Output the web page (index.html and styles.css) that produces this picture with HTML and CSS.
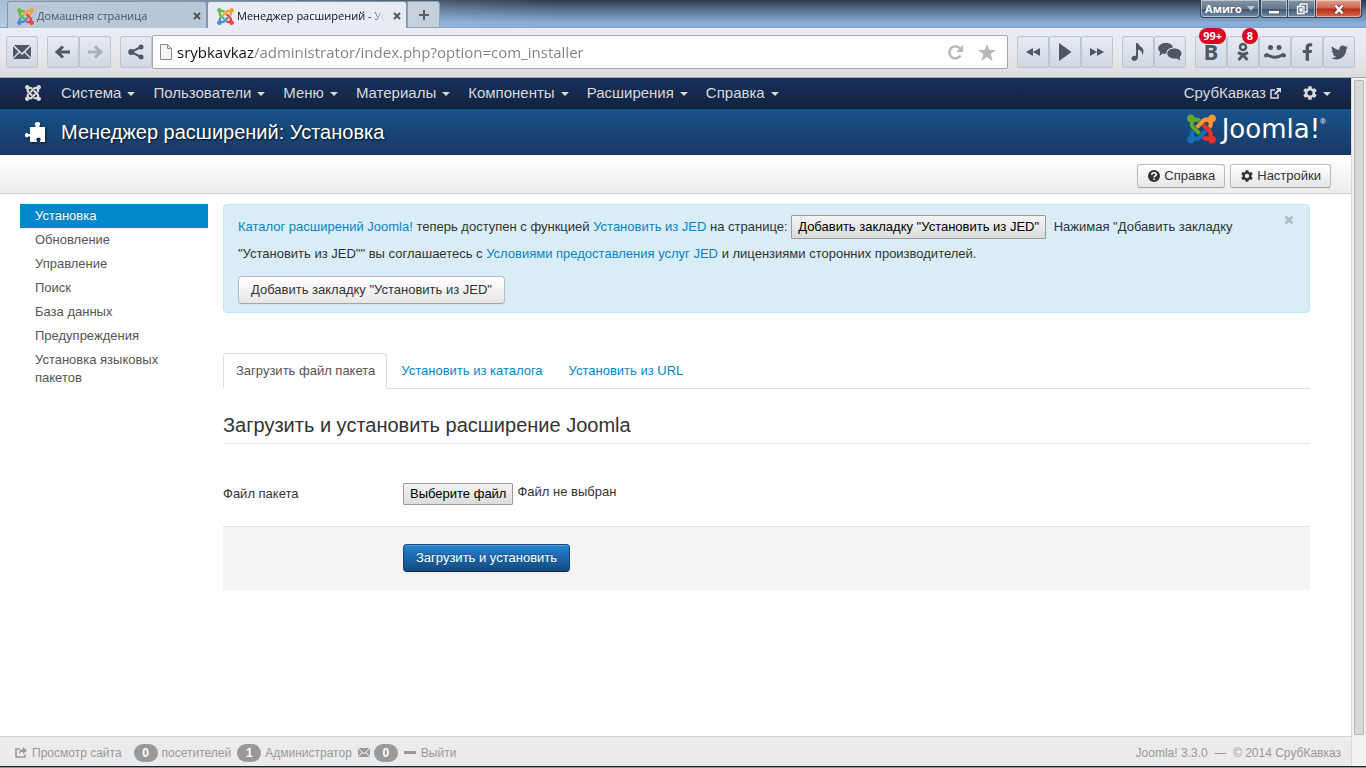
FILE: index.html
```html
<!DOCTYPE html>
<html lang="ru">
<head>
<meta charset="utf-8">
<title>Менеджер расширений - Установка</title>
<link rel="stylesheet" href="styles.css">
</head>
<body>
<svg class="defs" aria-hidden="true">
  <symbol id="j-a" viewBox="0 0 448 512"><path d="M.6 92.1C.6 58.8 27.4 32 60.4 32c30 0 54.5 21.9 59.2 50.2 32.6-7.6 67.1.6 96.5 30l-44.3 44.3c-20.5-20.5-42.6-16.3-55.4-3.5-14.3 14.3-14.3 37.9 0 52.2l99.5 99.5-44 44.3c-87.7-87.2-49.7-49.7-99.8-99.7-26.8-26.5-35-64.8-24.8-98.9C20.4 144.6.6 120.7.6 92.1z"/></symbol>
  <symbol id="j-b" viewBox="0 0 448 512"><path d="M130.1 208.5l44.3 44.3c10-10 89.7-89.7 99.7-99.8 14.3-14.3 37.6-14.3 51.9 0 12.8 12.8 17 35-3.5 55.4l44 44.3c31.2-31.2 38.5-67.6 28.9-101.2 29.2-4.1 51.9-29.2 51.9-59.5 0-33.2-26.8-60.1-59.8-60.1-30.3 0-55.4 22.5-59.5 51.6-33.8-9.9-71.7-1.5-98.3 25.1-18.3 19.1-71.1 71.5-99.6 99.9z"/></symbol>
  <symbol id="j-c" viewBox="0 0 448 512"><path d="M396.4 360.7c8.2-32.7-.9-68.5-26.3-93.9-11.8-12.2 5 4.7-99.5-99.7l-44.3 44.3 99.7 99.7c14.3 14.3 14.3 37.6 0 51.9-12.8 12.8-35 17-55.4-3.5l-44 44.3c27.6 30.2 68 38.8 102.7 28 5.5 27.4 29.7 48.1 58.9 48.1 33 0 59.8-26.8 59.8-60.1 0-30.2-22.5-55-51.6-59.1z"/></symbol>
  <symbol id="j-d" viewBox="0 0 448 512"><path d="M312.1 307.6l-44-44.3c-87 86.4-50.4 50.4-99.7 99.8-14.3 14.3-37.6 14.3-51.9 0-13.1-13.4-16.9-35.3 3.2-55.4l-44-44.3c-30.2 30.2-38 65.2-29.5 98.3-26.7 6-46.2 29.9-46.2 58.2C0 453.2 26.8 480 59.8 480c28.6 0 52.5-19.8 58.6-46.7 32.7 8.2 68.5-.6 94.2-26 32.1-32 12.2-12.4 99.5-99.7z"/></symbol>
  <symbol id="joomla" viewBox="0 32 448 448"><use href="#j-a" width="448" height="512"/><use href="#j-b" width="448" height="512"/><use href="#j-c" width="448" height="512"/><use href="#j-d" width="448" height="512"/></symbol>
  <symbol id="joomla-color" viewBox="0 32 448 448"><use href="#j-a" width="448" height="512" fill="#5fa829"/><use href="#j-b" width="448" height="512" fill="#ff982e"/><use href="#j-c" width="448" height="512" fill="#e8322b"/><use href="#j-d" width="448" height="512" fill="#1671b5"/></symbol>
  <symbol id="joomla-tab" viewBox="0 32 448 448"><use href="#j-a" width="448" height="512" fill="#6cbb45"/><use href="#j-b" width="448" height="512" fill="#f9a032"/><use href="#j-c" width="448" height="512" fill="#f04438"/><use href="#j-d" width="448" height="512" fill="#4a8fd0"/></symbol>
  <symbol id="gear" viewBox="2 2 20 20"><path d="M19.14 12.94c.04-.3.06-.61.06-.94 0-.32-.02-.64-.07-.94l2.03-1.58c.18-.14.23-.41.12-.61l-1.92-3.32c-.12-.22-.37-.29-.59-.22l-2.39.96c-.5-.38-1.03-.7-1.62-.94L14.4 2.81c-.04-.24-.24-.41-.48-.41h-3.84c-.24 0-.43.17-.47.41L9.25 5.35C8.66 5.59 8.12 5.92 7.63 6.29L5.24 5.33c-.22-.08-.47 0-.59.22L2.74 8.87c-.12.21-.08.47.12.61l2.03 1.58C4.84 11.36 4.8 11.69 4.8 12s.02.64.07.94l-2.03 1.58c-.18.14-.23.41-.12.61l1.92 3.32c.12.22.37.29.59.22l2.39-.96c.5.38 1.03.7 1.62.94l.36 2.54c.05.24.24.41.48.41h3.84c.24 0 .44-.17.47-.41l.36-2.54c.59-.24 1.13-.56 1.62-.94l2.39.96c.22.08.47 0 .59-.22l1.92-3.32c.12-.22.07-.47-.12-.61zM12 15.6a3.6 3.6 0 1 1 0-7.2 3.6 3.6 0 0 1 0 7.2z"/></symbol>
  <symbol id="envelope" viewBox="0 0 18 14"><path d="M1 0h16L9 8zM0 1.200l5.600 5.500L0 12.400zM18 1.200v11.200l-5.600-5.700zM6.600 7.700L9 10l2.400-2.300L17.600 14H.4z"/></symbol>
</svg>

<header class="browser">
  <div class="titlebar">
    <nav class="tabs-strip" aria-label="Вкладки браузера">
      <div class="btab">
        <svg class="favicon"><use href="#joomla-tab"/></svg>
        <span class="btab-title">Домашняя страница</span>
        <button class="btab-close" aria-label="Закрыть вкладку"><svg viewBox="0 0 8 8"><path d="M1 1l6 6M7 1L1 7"/></svg></button>
      </div>
      <div class="btab btab-active">
        <svg class="favicon"><use href="#joomla-tab"/></svg>
        <span class="btab-title">Менеджер расширений - Установка</span>
        <button class="btab-close" aria-label="Закрыть вкладку"><svg viewBox="0 0 8 8"><path d="M1 1l6 6M7 1L1 7"/></svg></button>
      </div>
      <button class="new-tab" aria-label="Новая вкладка"><svg viewBox="0 0 12 12"><path d="M6 1v10M1 6h10"/></svg></button>
    </nav>
    <div class="window-controls">
      <button class="wc wc-name">Амиго <span class="wc-arrow"></span></button>
      <div class="wc-group">
        <button class="wc wc-min" aria-label="Свернуть"><svg width="12" height="14" viewBox="0 0 12 14"><rect x=".5" y="8.500" width="11" height="3.500" fill="#fff" stroke="#566070"/></svg></button>
        <button class="wc wc-max" aria-label="Развернуть"><svg width="12" height="14" viewBox="0 0 12 14" fill="none"><path d="M4 4V2h7v8H9" stroke="#566070" stroke-width="3"/><path d="M4 4V2h7v8H9M1.500 4.500h6.500v7H1.500zM4 7h2v2H4z" stroke="#fff" stroke-width="1.300"/></svg></button>
        <button class="wc wc-close" aria-label="Закрыть"><svg width="12" height="14" viewBox="0 0 12 14" fill="none"><path d="M2.500 3.500l7 8M9.500 3.500l-7 8" stroke="#5c3434" stroke-width="4"/><path d="M2.500 3.500l7 8M9.500 3.500l-7 8" stroke="#fff" stroke-width="2.600"/></svg></button>
      </div>
    </div>
  </div>

  <div class="toolbar">
    <div class="tool-group">
      <button class="tool" aria-label="Почта"><svg width="18" height="14"><use href="#envelope"/></svg></button>
    </div>
    <div class="tool-group">
      <button class="tool" aria-label="Назад"><svg width="16" height="14" viewBox="0 0 16 14" class="stroke"><path d="M15 7H2M8 1.500L2 7l6 5.500"/></svg></button>
      <button class="tool tool-off" aria-label="Вперёд"><svg width="16" height="14" viewBox="0 0 16 14" class="stroke"><path d="M1 7h13M8 1.500L14 7l-6 5.500"/></svg></button>
    </div>
    <div class="tool-address">
      <button class="tool" aria-label="Поделиться"><svg width="16" height="16" viewBox="0 0 16 16"><path d="M13 3L3 8l10 5" fill="none" stroke="currentColor" stroke-width="2"/><circle cx="13" cy="3" r="2.500"/><circle cx="3.200" cy="8" r="3"/><circle cx="13" cy="13" r="2.500"/></svg></button>
      <div class="address">
        <svg width="12" height="16" viewBox="0 0 12 16" fill="#f4f4f4" stroke="#8c8c8c"><path d="M.5.500h7l4 4v11H.500zM7.500.500v4h4"/></svg>
        <input class="url" type="text" aria-label="Адрес" value="srybkavkaz/administrator/index.php?option=com_installer">
        <button class="addr-btn" aria-label="Обновить"><svg width="17" height="17" viewBox="0 0 17 17"><path d="M13.500 11.500a6 6 0 1 1-.5-7" fill="none" stroke="currentColor" stroke-width="2.400"/><path d="M16 1v7H9z"/></svg></button>
        <button class="addr-btn" aria-label="В закладки"><svg width="18" height="17" viewBox="0 0 18 17"><path d="M9 0l2.300 6H18l-5.300 4.100L14.600 17 9 12.900 3.400 17l1.900-6.900L0 6h6.700z"/></svg></button>
      </div>
    </div>
    <div class="tool-group">
      <button class="tool" aria-label="Предыдущий трек"><svg width="14" height="8" viewBox="0 0 14 8"><path d="M7 0v8L0 4zM14 0v8L7 4z"/></svg></button>
      <button class="tool" aria-label="Играть"><svg width="14" height="18" viewBox="0 0 14 18"><path d="M1 0l12.500 9L1 18z"/></svg></button>
      <button class="tool" aria-label="Следующий трек"><svg width="14" height="8" viewBox="0 0 14 8"><path d="M0 0v8l7-4zM7 0v8l7-4z"/></svg></button>
    </div>
    <div class="tool-group">
      <button class="tool" aria-label="Музыка"><svg width="14" height="18" viewBox="0 0 14 18"><path d="M5 0h2c.4 3 5.500 4 5.500 8 0 1.500-.5 3-1.300 4 .2-3-1.200-4.700-4.200-5.500V14c0 2.200-1.500 3.800-3.800 3.800C1.500 17.800.5 17 .500 15.500c0-2 2.200-3.300 4.500-2.700z"/></svg></button>
      <button class="tool" aria-label="Сообщения"><svg width="24" height="18" viewBox="0 0 24 18"><path d="M7.500 0C12 0 14.700 2 15 4.600 11 5 8.300 7 8.300 10.700 7 11 5.500 10.800 4.700 10.500L1.500 13l.6-4C-2 5.500 1 0 7.500 0z"/><path d="M16 5.500c4.500 0 7.500 2.200 7.500 5 0 1.500-.7 2.700-1.800 3.600l.5 3.200-3.300-1.900c-5 .9-9.600-1.400-9.600-4.900 0-2.800 2.700-5 6.700-5z"/></svg></button>
    </div>
    <div class="tool-group">
      <button class="tool tool-vk" aria-label="ВКонтакте, больше 99">B<span class="badge">99+</span></button>
      <button class="tool" aria-label="Одноклассники, 8"><svg width="12" height="18" viewBox="0 0 12 18" fill="none" stroke="currentColor" stroke-width="2.500"><circle cx="6" cy="4" r="3"/><path d="M1 9.500q5 3.500 10 0M6 12l-4.500 5M6 12l4.500 5" stroke-width="2.800"/></svg><span class="badge">8</span></button>
      <button class="tool" aria-label="Мой Мир"><svg width="22" height="14" viewBox="0 0 22 14"><circle cx="6.500" cy="2.500" r="2.500"/><circle cx="15" cy="2.500" r="2.500"/><path d="M2 9q9 6.500 18 0" fill="none" stroke="currentColor" stroke-width="2.800"/><circle cx="2" cy="10.500" r="2"/><circle cx="20" cy="10.500" r="2"/></svg></button>
      <button class="tool" aria-label="Facebook"><svg width="11" height="18" viewBox="0 0 320 512"><path d="M279.140 288l14.220-92.660h-88.910v-60.130c0-25.350 12.420-50.060 52.240-50.060h40.420V6.260S260.430 0 225.360 0c-73.220 0-121.080 44.380-121.080 124.720v70.620H22.890V288h81.390v224h100.170V288z"/></svg></button>
      <button class="tool" aria-label="Twitter"><svg width="17" height="17" viewBox="0 0 512 512"><path d="M459.370 151.716c.325 4.548.325 9.097.325 13.645 0 138.720-105.583 298.558-298.558 298.558-59.452 0-114.680-17.219-161.137-47.106 8.447.974 16.568 1.299 25.340 1.299 49.055 0 94.213-16.568 130.274-44.832-46.132-.975-84.792-31.188-98.112-72.772 6.498.974 12.995 1.624 19.818 1.624 9.421 0 18.843-1.300 27.614-3.573-48.081-9.747-84.143-51.980-84.143-102.985v-1.299c13.969 7.797 30.214 12.670 47.431 13.319-28.264-18.843-46.781-51.005-46.781-87.391 0-19.492 5.197-37.360 14.294-52.954 51.655 63.675 129.300 105.258 216.365 109.807-1.624-7.797-2.599-15.918-2.599-24.040 0-57.828 46.782-104.934 104.934-104.934 30.213 0 57.502 12.670 76.670 33.137 23.715-4.548 46.456-13.320 66.599-25.340-7.798 24.366-24.366 44.833-46.132 57.827 21.117-2.273 41.584-8.122 60.426-16.243-14.292 20.791-32.161 39.308-52.628 54.253z"/></svg></button>
    </div>
  </div>
</header>

<div class="viewport">
  <div class="page">
    <nav class="navbar">
      <a class="nav-home" href="#" aria-label="Joomla!"><svg width="16" height="16"><use href="#joomla"/></svg></a>
      <a class="nav-link" href="#">Система<span class="caret"></span></a>
      <a class="nav-link" href="#">Пользователи<span class="caret"></span></a>
      <a class="nav-link" href="#">Меню<span class="caret"></span></a>
      <a class="nav-link" href="#">Материалы<span class="caret"></span></a>
      <a class="nav-link" href="#">Компоненты<span class="caret"></span></a>
      <a class="nav-link" href="#">Расширения<span class="caret"></span></a>
      <a class="nav-link" href="#">Справка<span class="caret"></span></a>
      <span class="spacer"></span>
      <a class="nav-link nav-site" href="#">СрубКавказ<svg width="11" height="11" viewBox="0 0 11 11"><path d="M5 2H1v8h7V6" fill="none" stroke="currentColor" stroke-width="1.500"/><path d="M6 0h5v5L9.300 3.300 5.500 7 4 5.500l3.700-3.800z"/></svg></a>
      <a class="nav-link" href="#" aria-label="Профиль"><svg width="14" height="14"><use href="#gear"/></svg><span class="caret"></span></a>
    </nav>

    <div class="header">
      <svg class="puzzle" width="21" height="21" viewBox="0 0 21 21"><path d="M5 5h5.500V3.500C9 2 10 0 12.500 0S16 2 14.500 3.500V5H20v15h-5c-.6-1 1-1.600.7-3.200-.3-1.500-4-1.500-4.300 0C11 18.400 12.600 19 12 20H5v-5.500H3.500C2.500 16 0 15.700 0 13.300S2.500 10.500 3.500 12H5z"/></svg>
      <h1 class="page-title">Менеджер расширений: Установка</h1>
      <a class="brand" href="#"><svg width="29" height="30"><use href="#joomla-color"/></svg><span class="brand-name">Joomla!</span><span class="brand-mark">®</span></a>
    </div>

    <div class="subhead">
      <button class="btn btn-small"><svg width="12" height="12" viewBox="0 0 12 12"><circle cx="6" cy="6" r="6"/><path d="M3.800 4.800C3.800 2 8.300 2.200 8.200 4.600 8.100 6 6.100 5.900 6.100 7.500M6.100 8.500V10" fill="none" stroke="#fff" stroke-width="1.600"/></svg>Справка</button>
      <button class="btn btn-small"><svg width="12" height="12"><use href="#gear"/></svg>Настройки</button>
    </div>

    <div class="columns">
      <nav class="sidebar">
        <a class="side-link side-active" href="#">Установка</a>
        <a class="side-link" href="#">Обновление</a>
        <a class="side-link" href="#">Управление</a>
        <a class="side-link" href="#">Поиск</a>
        <a class="side-link" href="#">База данных</a>
        <a class="side-link" href="#">Предупреждения</a>
        <a class="side-link" href="#">Установка языковых пакетов</a>
      </nav>

      <main class="main">
        <div class="alert">
          <button class="alert-close" aria-label="Закрыть"><svg width="10" height="10" viewBox="0 0 10 10"><path d="M1.500 1.500l7 7M8.500 1.500l-7 7" stroke="currentColor" stroke-width="2.600"/></svg></button>
          <p class="alert-text"><a href="#">Каталог расширений Joomla!</a> теперь доступен с функцией <a href="#">Установить из JED</a> на странице: <button class="native-btn jed-btn">Добавить закладку "Установить из JED"</button> Нажимая "Добавить закладку "Установить из JED"" вы соглашаетесь с <a href="#">Условиями предоставления услуг JED</a> и лицензиями сторонних производителей.</p>
          <button class="btn">Добавить закладку "Установить из JED"</button>
        </div>

        <nav class="tabs">
          <a class="tab tab-active" href="#">Загрузить файл пакета</a>
          <a class="tab" href="#">Установить из каталога</a>
          <a class="tab" href="#">Установить из URL</a>
        </nav>

        <form class="form">
          <h2 class="legend">Загрузить и установить расширение Joomla</h2>
          <div class="control-row">
            <label class="control-label" for="package">Файл пакета</label>
            <div class="file">
              <label class="native-btn" for="package">Выберите файл</label>
              <input class="file-input" id="package" type="file">
              <span class="file-name">Файл не выбран</span>
            </div>
          </div>
          <div class="form-actions">
            <button class="btn btn-primary" type="button">Загрузить и установить</button>
          </div>
        </form>
      </main>
    </div>

    <footer class="status">
      <a class="status-link" href="#"><svg width="12" height="11" viewBox="0 0 12 11"><path d="M5 2H1v8h9V7.500" fill="none" stroke="currentColor" stroke-width="1.600"/><path d="M8 0l4 3.500L8 7V5C6 5 4.700 5.500 3.500 7.500 3.700 4 5.500 2.200 8 2z"/></svg>Просмотр сайта</a>
      <span class="status-item"><span class="count">0</span>посетителей</span>
      <span class="status-item"><span class="count">1</span>Администратор</span>
      <a class="status-item" href="#" aria-label="Сообщения"><svg width="12" height="9" viewBox="0 0 18 14" preserveAspectRatio="none"><use href="#envelope" width="18" height="14"/></svg><span class="count">0</span></a>
      <a class="status-link" href="#"><span class="dash"></span>Выйти</a>
      <span class="spacer"></span>
      <span>Joomla! 3.3.0 &nbsp;—&nbsp; © 2014 СрубКавказ</span>
    </footer>
  </div>
  <div class="scrollbar"><div class="thumb"></div></div>
</div>
<div class="taskbar-edge"></div>
</body>
</html>
```
FILE: styles.css
```css
* { box-sizing: border-box; }
body {
  margin: 0;
  min-height: 100vh;
  display: flex;
  flex-direction: column;
  background: #fff;
  color: #333;
  font: 13px/18px "Liberation Sans", Arial, sans-serif;
}
button { font: inherit; color: inherit; margin: 0; padding: 0; border: 0; background: none; cursor: pointer; }
a { color: #0088cc; text-decoration: none; }
svg { flex: none; }
svg:not([fill]) { fill: currentColor; }
.defs { position: absolute; width: 0; height: 0; }
.spacer { flex: 1; }

/* Browser window */
.titlebar {
  height: 28px;
  display: flex;
  justify-content: space-between;
  align-items: flex-start;
  padding: 0 4px 0 7px;
  border-bottom: 1px solid #7fa3cc;
  background:
    linear-gradient(90deg, rgba(182, 204, 228, .9) 0, rgba(150, 180, 212, 0) 560px),
    linear-gradient(#2a3a4b, #5f7c9c 45%, #89aeda 85%, #86abd9);
}
.tabs-strip { display: flex; padding-top: 1px; }
.btab {
  width: 200px;
  height: 27px;
  display: flex;
  align-items: center;
  padding: 2px 5px 0 9px;
  border: 1px solid #8195ab;
  border-bottom: 0;
  border-radius: 3px 3px 0 0;
  background: #b9c8d9;
  color: #4c545e;
  font: 11px/16px "Open Sans", "Noto Sans", sans-serif;
}
.btab-active { background: #e9ecf4; color: #111; }
.favicon { width: 17px; height: 17px; margin-right: 3px; }
.btab-title {
  flex: 1;
  min-width: 0;
  overflow: hidden;
  white-space: nowrap;
  -webkit-mask-image: linear-gradient(90deg, #000 88%, transparent);
  mask-image: linear-gradient(90deg, #000 88%, transparent);
}
.btab-close { display: flex; margin-left: 8px; color: #555; }
.btab-close svg { width: 8px; height: 8px; stroke: currentColor; stroke-width: 2; }
.new-tab {
  width: 33px;
  height: 27px;
  display: grid;
  place-items: center;
  border: 1px solid #8ea2b9;
  border-radius: 0 3px 0 0;
  background: #c6d0dc;
  color: #555c66;
}
.new-tab svg { width: 12px; height: 12px; stroke: currentColor; stroke-width: 2; }
.window-controls { display: flex; }
.wc {
  height: 18px;
  display: flex;
  align-items: center;
  justify-content: center;
  border: 1px solid #37475a;
  border-top: 0;
  box-shadow: inset 0 0 0 1px rgba(255, 255, 255, .45);
  background: linear-gradient(#8595a7, #66788d 50%, #3f5166 52%, #7390ad);
}
.wc-name { width: 60px; gap: 5px; border-radius: 0 0 4px 4px; color: #fff; font: bold 11px/16px "Open Sans", "Noto Sans", sans-serif; }
.wc-arrow { border: 4px solid transparent; border-top: 5px solid #b8c5d3; border-bottom: 0; }
.wc-group { display: flex; }
.wc-min { width: 28px; border-radius: 0 0 0 4px; }
.wc-max { width: 28px; border-left: 0; }
.wc-close { width: 46px; border-left: 0; border-radius: 0 0 4px 0; background: linear-gradient(#e0a092, #cd6350 48%, #b52d17 52%, #d66b4c); }

.toolbar {
  height: 50px;
  display: flex;
  align-items: flex-start;
  gap: 9px;
  padding: 7px 11px 0 6px;
  border-bottom: 1px solid #a9a9a9;
  background: linear-gradient(#e9ecf4, #e8e9ed 50%, #dcdcdc);
}
.tool-group { display: flex; padding-top: 1px; }
.tool {
  position: relative;
  width: 32px;
  height: 32px;
  display: grid;
  place-items: center;
  border: 1px solid #b9c6d3;
  border-radius: 2px;
  background: linear-gradient(#e6eaf0, #cfd8e2);
  color: #4f5762;
}
.tool-off { color: #a9b0b8; }
.tool-vk { font: bold 22px/28px "Open Sans", "Noto Sans", sans-serif; align-items: start; }
svg.stroke { fill: none; stroke: currentColor; stroke-width: 3; }
.badge {
  position: absolute;
  top: -9px;
  right: 0;
  min-width: 16px;
  padding: 0 4px;
  border-radius: 8px;
  background: #dd0523;
  color: #fff;
  font: bold 11px/16px "Open Sans", "Noto Sans", sans-serif;
}
.tool-address { flex: 1; display: flex; align-items: center; }
.address {
  flex: 1;
  height: 34px;
  display: flex;
  align-items: center;
  padding: 0 11px 0 7px;
  border: 1px solid #a3a6ab;
  border-radius: 2px;
  background: #fff;
}
.url {
  flex: 1;
  min-width: 0;
  padding: 0;
  margin-left: 5px;
  border: 0;
  outline: 0;
  font: 15px/24px "Open Sans", "Noto Sans", sans-serif;
  background: linear-gradient(90deg, #111 76px, #808080 76px);
  -webkit-background-clip: text;
  background-clip: text;
  -webkit-text-fill-color: transparent;
}
.addr-btn { display: flex; margin-left: 14px; color: #b4b7bb; }

/* Page viewport */
.viewport { flex: 1; display: flex; }
.page { flex: 1; min-width: 0; display: flex; flex-direction: column; }
.scrollbar { width: 15px; padding: 2px 2px 31px; border-left: 1px solid #d9d9d9; background: #f1f1f1; }
.thumb { height: 100%; border: 1px solid #b5b5b5; border-radius: 1px; background: #d8d8d8; }
.taskbar-edge { height: 2px; border-top: 1px solid #1d2635; background: #8793a5; }

.navbar {
  height: 31px;
  display: flex;
  align-items: center;
  padding: 0 11px 0 16px;
  border-bottom: 1px solid #0d1f3a;
  background: linear-gradient(#17305b, #13233f);
  color: #d9d9d9;
  font-size: 15px;
}
.nav-home { display: flex; padding: 0 11px 0 9px; color: inherit; }
.nav-link { display: flex; align-items: center; padding: 0 9px; color: inherit; }
.nav-site { margin-right: 4px; }
.nav-site svg { margin-left: 4px; }
.caret { margin: 2px 0 0 6px; border: 4px solid transparent; border-top-color: currentColor; border-bottom: 0; }

.header {
  height: 46px;
  display: flex;
  align-items: center;
  padding: 0 25px;
  background: linear-gradient(#165387, #1a3867);
  color: #fff;
}
.puzzle { filter: drop-shadow(1px 1px 1px rgba(0, 0, 0, .6)); }
.page-title { flex: 1; margin: 0 0 0 15px; font-size: 20px; line-height: 28px; font-weight: normal; text-shadow: 1px 1px 2px rgba(0, 0, 0, .8); }
.brand { display: flex; align-items: center; margin-top: -6px; color: #fff; }
.brand-name { margin-left: 6px; font: 26px/30px "DejaVu Sans", sans-serif; }
.brand-mark { align-self: flex-start; font-size: 8px; line-height: 16px; }

.subhead {
  height: 39px;
  display: flex;
  justify-content: flex-end;
  align-items: center;
  gap: 5px;
  padding: 3px 20px 0;
  border-bottom: 1px solid #ccc;
  background: linear-gradient(#fff, #ededed);
}
.btn {
  height: 28px;
  padding: 0 12px;
  border: 1px solid #bbb;
  border-bottom-color: #a2a2a2;
  border-radius: 4px;
  background: linear-gradient(#fff, #e6e6e6);
  box-shadow: inset 0 1px 0 rgba(255, 255, 255, .2), 0 1px 2px rgba(0, 0, 0, .05);
  color: #333;
}
.btn-small { height: 24px; display: flex; align-items: center; gap: 4px; padding: 0 9px 0 10px; border-radius: 3px; }
.btn-primary {
  border-color: #15497c;
  border-bottom-color: #0d2d4d;
  background: linear-gradient(#2384d3, #15497c);
  color: #fff;
  text-shadow: 0 -1px 0 rgba(0, 0, 0, .25);
}
.native-btn {
  display: inline-block;
  padding: 0 6px;
  border: 1px solid #9b9b9b;
  border-radius: 1px;
  background: linear-gradient(#f4f4f4, #dcdcdc);
  color: #000;
  line-height: 20px;
}

.columns { flex: 1; display: flex; align-items: flex-start; gap: 15px; padding: 10px 41px 20px 20px; }
.sidebar { width: 188px; flex: none; display: flex; flex-direction: column; }
.side-link { padding: 3px 15px; color: #555; }
.side-active { background: #0088cc; color: #fff; text-shadow: 0 -1px 0 rgba(0, 0, 0, .2); }
.main { flex: 1; min-width: 0; }

.alert {
  position: relative;
  padding: 8px 35px 8px 14px;
  border: 1px solid #bce8f1;
  border-radius: 4px;
  background: #d9edf7;
}
.alert-text { margin: 0 0 9px; line-height: 27px; }
.alert-text a { color: #0c83c6; }
.jed-btn { height: 24px; margin-right: 4px; line-height: 22px; }
.alert-close { position: absolute; top: 10px; right: 15px; display: flex; color: #adbec6; }

.tabs { display: flex; gap: 1px; margin-top: 40px; border-bottom: 1px solid #ddd; }
.tab { padding: 8px 11px 8px 12px; border: 1px solid transparent; margin-bottom: -1px; }
.tab-active { border-color: #ddd #ddd #fff; border-radius: 4px 4px 0 0; background: #fff; color: #555; }

.legend { margin: 18px 0 36px; border-bottom: 1px solid #e5e5e5; font-size: 20px; line-height: 36px; font-weight: normal; }
.control-row { display: flex; min-height: 46px; }
.control-label { width: 180px; padding-top: 5px; }
.file { display: flex; align-items: flex-start; padding-top: 3px; }
.file-input { width: 1px; height: 1px; margin: 0; opacity: 0; }
.file-name { margin-left: 3px; }
.form-actions { padding: 17px 20px 18px 180px; border-top: 1px solid #e5e5e5; background: #f4f4f4; }

.status {
  height: 30px;
  display: flex;
  align-items: center;
  padding: 2px 10px 0 15px;
  border-top: 1px solid #d4d4d4;
  background: #ebebeb;
  color: #999;
  font-size: 12px;
}
.status-link, .status-item { display: flex; align-items: center; gap: 5px; color: inherit; }
.status-link:first-child { margin-right: 12px; }
.status-item { gap: 4px; margin-right: 6px; }
.count {
  min-width: 24px;
  border-radius: 9px;
  background: #999;
  color: #fff;
  font-weight: bold;
  text-align: center;
}
.dash { width: 12px; height: 3px; background: #999; }
```
